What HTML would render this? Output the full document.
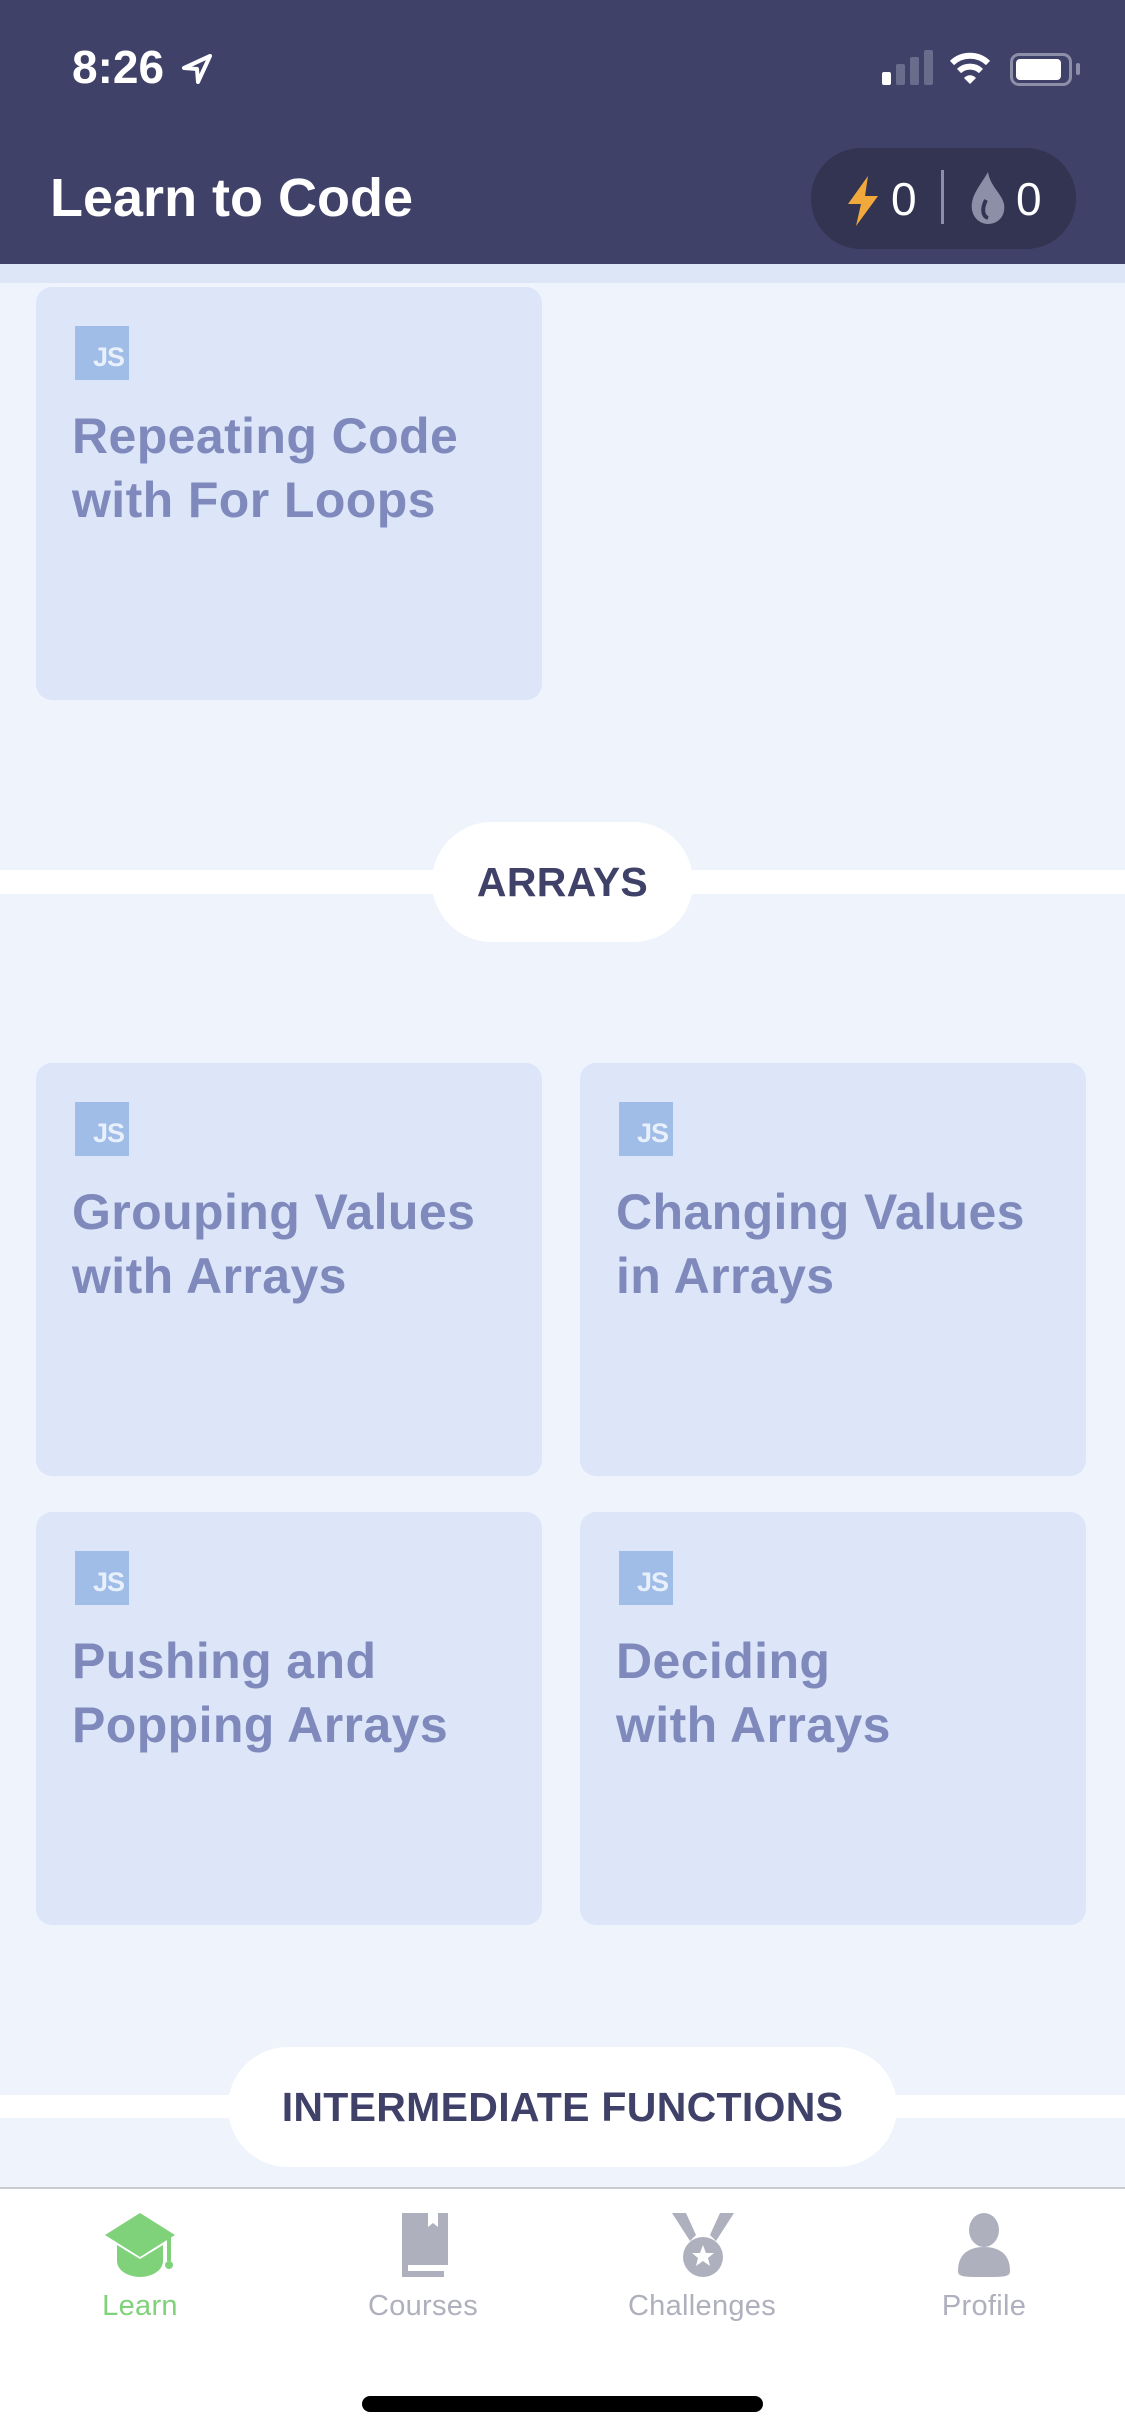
<!DOCTYPE html>
<html><head><meta charset="utf-8"><style>
*{margin:0;padding:0;box-sizing:border-box}
body{width:1125px;height:2436px;overflow:hidden;background:#eff4fc;font-family:"Liberation Sans",sans-serif;position:relative}
.abs{position:absolute}
.hdr{left:0;top:0;width:1125px;height:264px;background:#3f4168}
.card{position:absolute;width:506px;height:413px;background:#dce6f8;border-radius:16px}
.js{position:absolute;left:39px;top:39px;width:54px;height:54px;background:#a0bde8;color:#e8f0fb;font-weight:bold;font-size:27px;text-align:right;padding:16px 5px 0 0;letter-spacing:-1px}
.ct{position:absolute;left:36px;top:117px;color:#7f89bb;font-weight:bold;font-size:50px;line-height:64px;letter-spacing:0.4px}
.line{left:0;width:1125px;background:#fff}
.pill{background:#fff;border-radius:60px;color:#3f4168;font-weight:bold;font-size:41px;text-align:center;line-height:120px;letter-spacing:0.3px}
.tab{position:absolute;top:2290px;font-size:29px;color:#aeb0bd;text-align:center;width:200px;letter-spacing:0.3px}
</style></head><body>
<div class="abs hdr"></div>
<div class="abs" style="left:72px;top:40px;color:#fff;font-size:46px;font-weight:bold">8:26</div>
<svg class="abs" style="left:180px;top:52px" width="34" height="34" viewBox="0 0 34 34"><path d="M30 4 L4 16 L17 17 L18 30 Z" fill="none" stroke="#fff" stroke-width="4" stroke-linejoin="round"/></svg>
<div class="abs" style="left:882px;top:72px;width:9px;height:13px;background:#fff;border-radius:2px"></div>
<div class="abs" style="left:896px;top:64px;width:9px;height:21px;background:#6a6c8c;border-radius:2px"></div>
<div class="abs" style="left:910px;top:57px;width:9px;height:28px;background:#6a6c8c;border-radius:2px"></div>
<div class="abs" style="left:924px;top:50px;width:9px;height:35px;background:#6a6c8c;border-radius:2px"></div>
<svg class="abs" style="left:948px;top:50px" width="44" height="36" viewBox="0 0 44 36"><path d="M4 13 A26 26 0 0 1 40 13" stroke="#fff" stroke-width="6" fill="none"/><path d="M11 21 A16 16 0 0 1 33 21" stroke="#fff" stroke-width="6" fill="none"/><path d="M16 28 L22 34 L28 28 A8 8 0 0 0 16 28Z" fill="#fff"/></svg>
<div class="abs" style="left:1010px;top:53px;width:62px;height:33px;border:3px solid #8d8fa8;border-radius:9px"></div>
<div class="abs" style="left:1016px;top:59px;width:45px;height:21px;background:#fff;border-radius:4px"></div>
<div class="abs" style="left:1076px;top:63px;width:4px;height:12px;background:#8d8fa8;border-radius:2px"></div>
<div class="abs" style="left:50px;top:167px;color:#fff;font-size:54px;font-weight:bold">Learn to Code</div>
<div class="abs" style="left:811px;top:148px;width:265px;height:101px;background:#323452;border-radius:50px"></div>
<svg class="abs" style="left:846px;top:176px" width="34" height="50" viewBox="0 0 34 50"><path d="M22 0 L2 28 L15 28 L10 50 L32 20 L19 20 Z" fill="#f2a93b"/></svg>
<div class="abs" style="left:891px;top:172px;color:#fff;font-size:46px">0</div>
<div class="abs" style="left:941px;top:170px;width:3px;height:54px;background:#8d8fa8"></div>
<svg class="abs" style="left:968px;top:172px" width="40" height="52" viewBox="0 0 40 52"><path d="M20 0 C12 14 2 24 4 38 C6 48 14 52 20 52 C30 52 38 44 36 32 C34 22 22 14 20 0Z" fill="#8d8fa8"/><path d="M18 28 C14 36 14 44 20 46" stroke="#323452" stroke-width="4" fill="none"/></svg>
<div class="abs" style="left:1016px;top:172px;color:#fff;font-size:46px">0</div>
<div class="abs" style="left:0;top:264px;width:1125px;height:19px;background:#dce6f7"></div>

<div class="card" style="left:36px;top:287px"><div class="js">JS</div><div class="ct">Repeating Code<br>with For Loops</div></div>

<div class="abs line" style="top:870px;height:24px"></div>
<div class="abs pill" style="left:432px;top:822px;width:261px;height:120px">ARRAYS</div>

<div class="card" style="left:36px;top:1063px"><div class="js">JS</div><div class="ct">Grouping Values<br>with Arrays</div></div>
<div class="card" style="left:580px;top:1063px"><div class="js">JS</div><div class="ct">Changing Values<br>in Arrays</div></div>
<div class="card" style="left:36px;top:1512px"><div class="js">JS</div><div class="ct">Pushing and<br>Popping Arrays</div></div>
<div class="card" style="left:580px;top:1512px"><div class="js">JS</div><div class="ct">Deciding<br>with Arrays</div></div>

<div class="abs line" style="top:2095px;height:23px"></div>
<div class="abs pill" style="left:228px;top:2047px;width:669px;height:120px">INTERMEDIATE FUNCTIONS</div>

<div class="abs" style="left:0;top:2187px;width:1125px;height:249px;background:#fff;border-top:2px solid #c8cace"></div>
<svg class="abs" style="left:105px;top:2213px" width="70" height="64" viewBox="0 0 70 64"><path d="M35 0 L70 22 L35 44 L0 22Z" fill="#7fd27a"/><path d="M12 32 V48 C12 58 24 64 35 64 C46 64 58 58 58 48 V32 L35 46Z" fill="#7fd27a"/><rect x="62" y="22" width="4" height="26" fill="#7fd27a"/><circle cx="64" cy="52" r="4" fill="#7fd27a"/></svg>
<svg class="abs" style="left:398px;top:2213px" width="52" height="64" viewBox="0 0 52 64"><path d="M4 0 H50 V52 H10 V58 H46 V64 H4Z" fill="#aeb0bd"/><path d="M30 0 V14 L35 10 L40 14 V0" fill="#fff"/></svg>
<svg class="abs" style="left:672px;top:2213px" width="62" height="64" viewBox="0 0 62 64"><path d="M0 0 H14 L24 22 L18 28Z M62 0 H48 L38 22 L44 28Z" fill="#aeb0bd"/><circle cx="31" cy="44" r="20" fill="#aeb0bd"/><path d="M31 32 L34 40 L42 40 L36 45 L38 53 L31 48 L24 53 L26 45 L20 40 L28 40Z" fill="#fff"/></svg>
<svg class="abs" style="left:956px;top:2213px" width="56" height="64" viewBox="0 0 56 64"><ellipse cx="28" cy="17" rx="15" ry="17" fill="#aeb0bd"/><path d="M2 58 C2 40 14 34 28 34 C42 34 54 40 54 58 C54 64 48 64 28 64 C8 64 2 64 2 58Z" fill="#aeb0bd"/></svg>
<div class="tab" style="left:40px;color:#7fd27a">Learn</div>
<div class="tab" style="left:323px">Courses</div>
<div class="tab" style="left:602px">Challenges</div>
<div class="tab" style="left:884px">Profile</div>
<div class="abs" style="left:362px;top:2396px;width:401px;height:16px;background:#000;border-radius:8px"></div>
</body></html>
